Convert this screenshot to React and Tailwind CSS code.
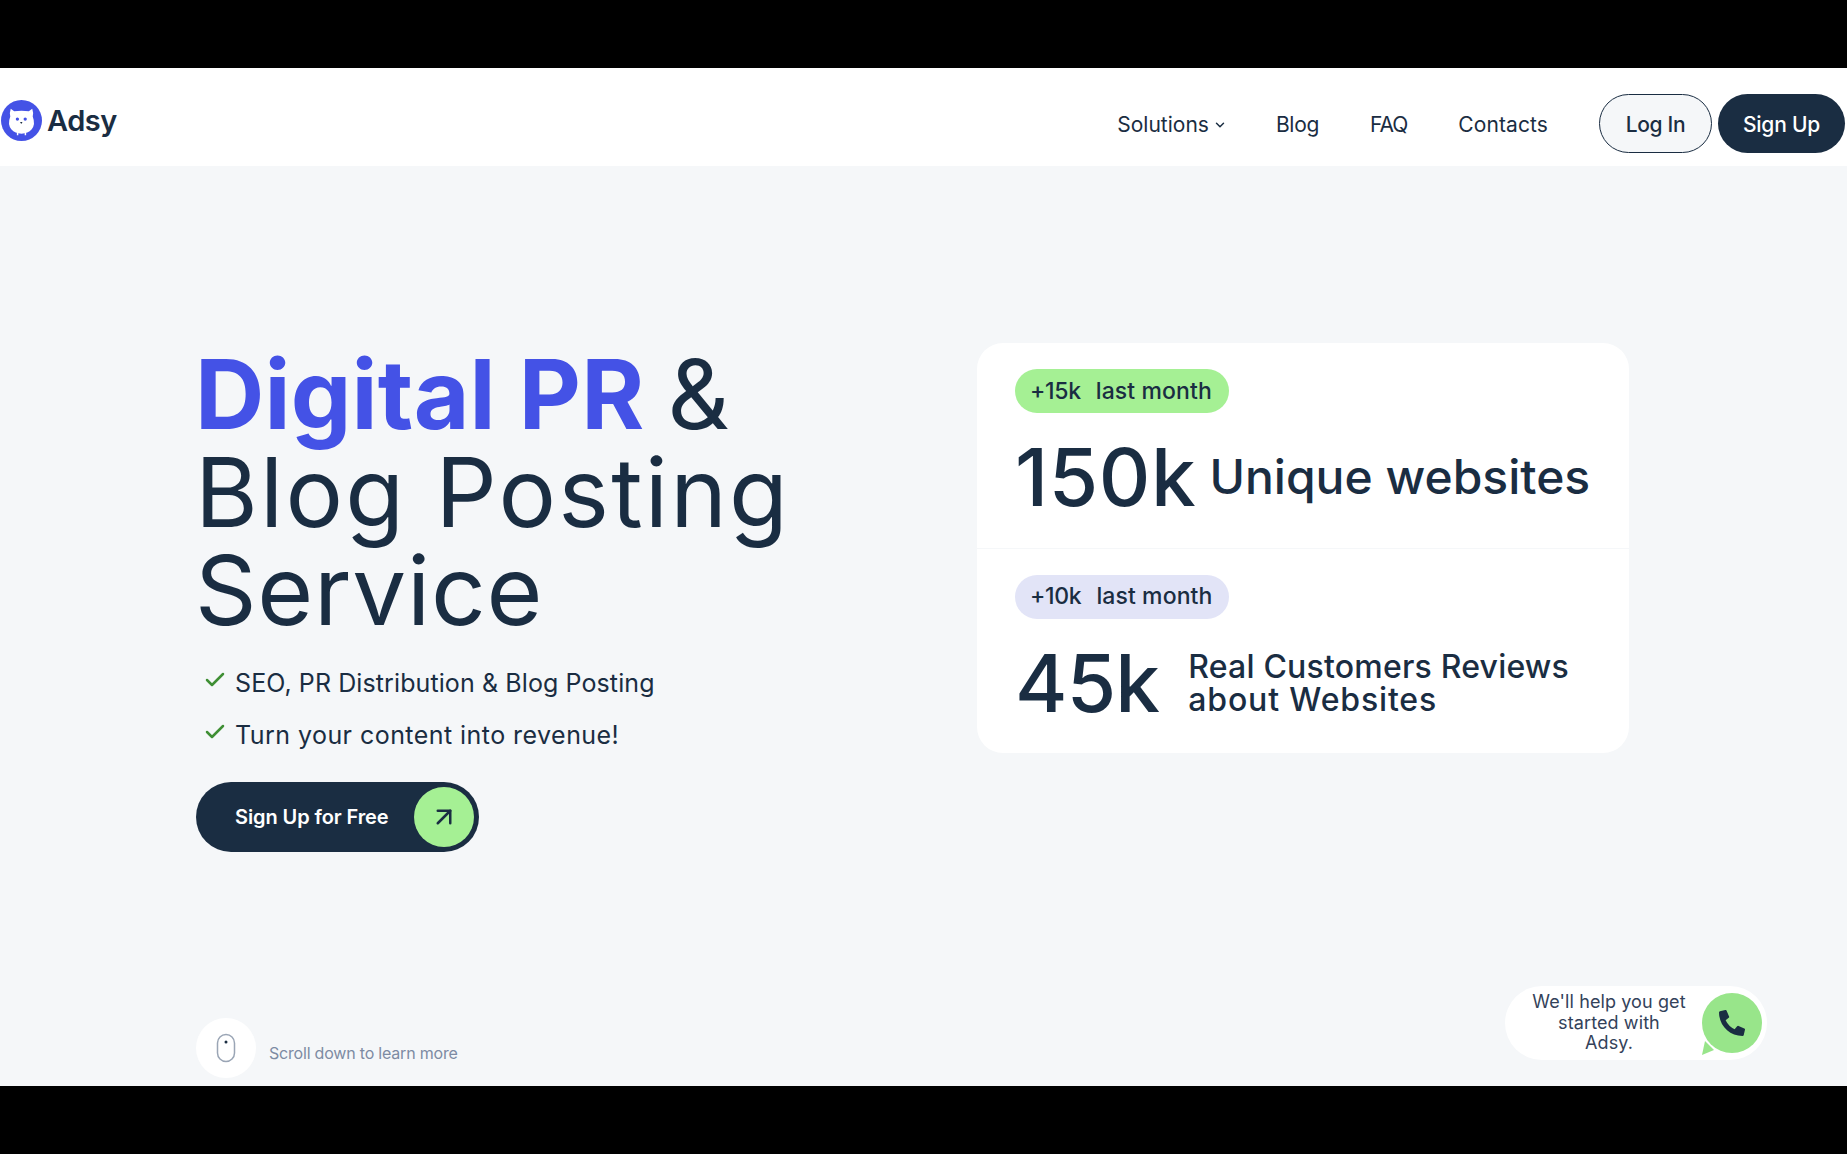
import { ChevronDown, Check, ArrowUpRight } from 'lucide-react'
import { FaPhoneAlt } from 'react-icons/fa'

function OwlLogo() {
  return (
    <svg width="41" height="41" viewBox="0 0 42 42" className="shrink-0">
      <circle cx="21" cy="21" r="21" fill="#4452e6" />
      <path
        d="M10 9l3.500 2.500Q21 10.500 28.500 11.500L32 9Q33.500 13 32.500 17Q35.500 25 31.500 30Q27.500 34.500 21 34.500Q14.500 34.500 10.500 30Q6.500 25 9.500 17Q8.500 13 10 9z"
        fill="#fff"
      />
      <path d="M17 33v3M25 33v3" stroke="#fff" strokeWidth="1.500" />
      <circle cx="16.800" cy="19.500" r="1.700" fill="#4452e6" />
      <circle cx="24.800" cy="19.500" r="1.700" fill="#4452e6" />
      <path d="M19.500 22.500h2.500l-1.250 2z" fill="#1a2d42" />
    </svg>
  )
}

function Stat({ pill, pillClass, value, valueClass, children, gapClass }) {
  return (
    <div className="px-[38px] h-[205px] pt-[26px]">
      <div className={`inline-flex items-center whitespace-nowrap h-[44px] w-[214px] rounded-full pl-[15px] text-[23px] font-medium tracking-[-0.3px] ${pillClass}`}>
        <span className="mr-[15px]">{pill}</span>
        <span className="tracking-[0.1px]">last month</span>
      </div>
      <div className={`flex items-center mt-[19px] ${gapClass}`}>
        <span className={`text-[80px] leading-[90px] font-medium ${valueClass}`}>{value}</span>
        {children}
      </div>
    </div>
  )
}

export default function App() {
  return (
    <div className="flex flex-col h-[1154px] w-full overflow-hidden bg-black text-[#1a2d42] font-['Inter',sans-serif]">
      <div className="h-[68px] shrink-0" />

      <header className="h-[98px] shrink-0 bg-white flex justify-between items-start pt-[26px] pl-[1px] pr-[2px]">
        <div className="flex items-center gap-[5px] mt-[4px]">
          <OwlLogo />
          <span className="text-[29px] leading-[42px] font-semibold tracking-[-0.5px] mt-[2px]">Adsy</span>
        </div>
        <nav className="flex items-center h-[59px] text-[21px] gap-[51px]">
          <a className="flex items-center gap-[4px] mt-[2px] -mr-[2px]">
            Solutions <ChevronDown size={14} strokeWidth={2.5} />
          </a>
          <a className="mt-[2px] tracking-[-0.3px]">Blog</a>
          <a className="mt-[2px] tracking-[-1px]">FAQ</a>
          <a className="mt-[2px] tracking-[0.1px]">Contacts</a>
          <div className="flex gap-[6px] font-medium">
            <button className="w-[113px] h-[59px] pt-[2px] rounded-full border border-[#1a2d42] bg-[#f5f7f9] tracking-[-0.3px]">Log In</button>
            <button className="w-[127px] h-[59px] pt-[2px] rounded-full bg-[#1a2d42] text-white tracking-[-0.2px]">Sign Up</button>
          </div>
        </nav>
      </header>

      <main className="relative flex-1 flex flex-col bg-[#f5f7f9] pl-[196px]">
        <div className="flex items-start pt-[177px]">
          <div className="w-[781px] pt-[2px]">
            <h1 className="text-[96px] leading-[98px] -ml-[1px]">
              <span className="font-bold text-[#4452e6] tracking-[0.2px]">Digital PR</span>{' '}
              <span className="-ml-[4px]">&amp;</span>
              <br />
              <span className="tracking-[2.2px]">Blog Posting</span>
              <br />
              <span className="tracking-[0.7px]">Service</span>
            </h1>
            <ul className="mt-[30px] flex flex-col gap-[23px] text-[25px] leading-[29px]">
              <li className="flex items-center gap-[8px] pl-[7px] tracking-[0.1px]">
                <Check size={24} strokeWidth={2.5} className="text-[#3f8f35] -mt-[8px]" />
                SEO, PR Distribution &amp; Blog Posting
              </li>
              <li className="flex items-center gap-[8px] pl-[7px] tracking-[0.45px]">
                <Check size={24} strokeWidth={2.5} className="text-[#3f8f35] -mt-[8px]" />
                Turn your content into revenue!
              </li>
            </ul>
            <button className="mt-[32px] flex items-center justify-between w-[283px] h-[70px] rounded-full bg-[#1a2d42] pl-[39px] pr-[5px] text-white text-[20px] font-semibold tracking-[-0.1px]">
              Sign Up for Free
              <span className="flex items-center justify-center w-[60px] h-[60px] rounded-full bg-[#a5f094] text-[#1a2d42]">
                <ArrowUpRight size={30} strokeWidth={2} />
              </span>
            </button>
          </div>

          <section className="w-[652px] h-[410px] rounded-[26px] bg-white flex flex-col">
            <Stat pill="+15k" pillClass="bg-[#a5f094]" value="150k" valueClass="tracking-[0.6px]" gapClass="gap-[13px]">
              <span className="text-[48px] leading-[56px] font-medium whitespace-nowrap">Unique websites</span>
            </Stat>
            <div className="h-[1px] bg-[#f5f7f9]" />
            <Stat pill="+10k" pillClass="bg-[#e2e4f7]" value="45k" valueClass="tracking-[-0.8px]" gapClass="gap-[29px]">
              <span className="text-[32px] leading-[33px] font-medium whitespace-nowrap tracking-[0.2px]">
                Real Customers Reviews
                <br />
                <span className="tracking-[0.85px]">about Websites</span>
              </span>
            </Stat>
          </section>
        </div>

        <div className="mt-auto pb-[8px] flex items-center gap-[13px]">
          <span className="flex items-center justify-center w-[60px] h-[60px] rounded-full bg-white">
            <svg width="20" height="30" viewBox="0 0 20 30" fill="none">
              <rect x="1.500" y="1.500" width="17" height="27" rx="8.500" stroke="#9aa5b5" strokeWidth="1.500" />
              <circle cx="10" cy="9" r="1.500" fill="#1a2d42" />
            </svg>
          </span>
          <span className="text-[16px] tracking-[-0.2px] text-[#7d8ba3] mt-[9px]">Scroll down to learn more</span>
        </div>

        {/* chat widget floats over the page */}
        <div className="absolute left-[1505px] top-[820px] w-[262px] h-[74px] rounded-full bg-white flex items-center pl-[18px] pr-[5px]">
          <p className="w-[172px] text-center text-[18px] leading-[20.5px] tracking-[0.1px] text-[#33425a]">
            We'll help you get
            <br />
            started with
            <br />
            Adsy.
          </p>
          <span className="relative ml-auto flex items-center justify-center w-[60px] h-[60px] rounded-full bg-[#98e58a] text-[#1a2d42]">
            <FaPhoneAlt size={26} className="-scale-x-100 rotate-90" />
            <svg width="14" height="14" viewBox="0 0 14 14" className="absolute left-[0px] bottom-[-2px]">
              <path d="M3 0L0 14l12-5z" fill="#98e58a" />
            </svg>
          </span>
        </div>
      </main>

      <div className="h-[68px] shrink-0" />
    </div>
  )
}
